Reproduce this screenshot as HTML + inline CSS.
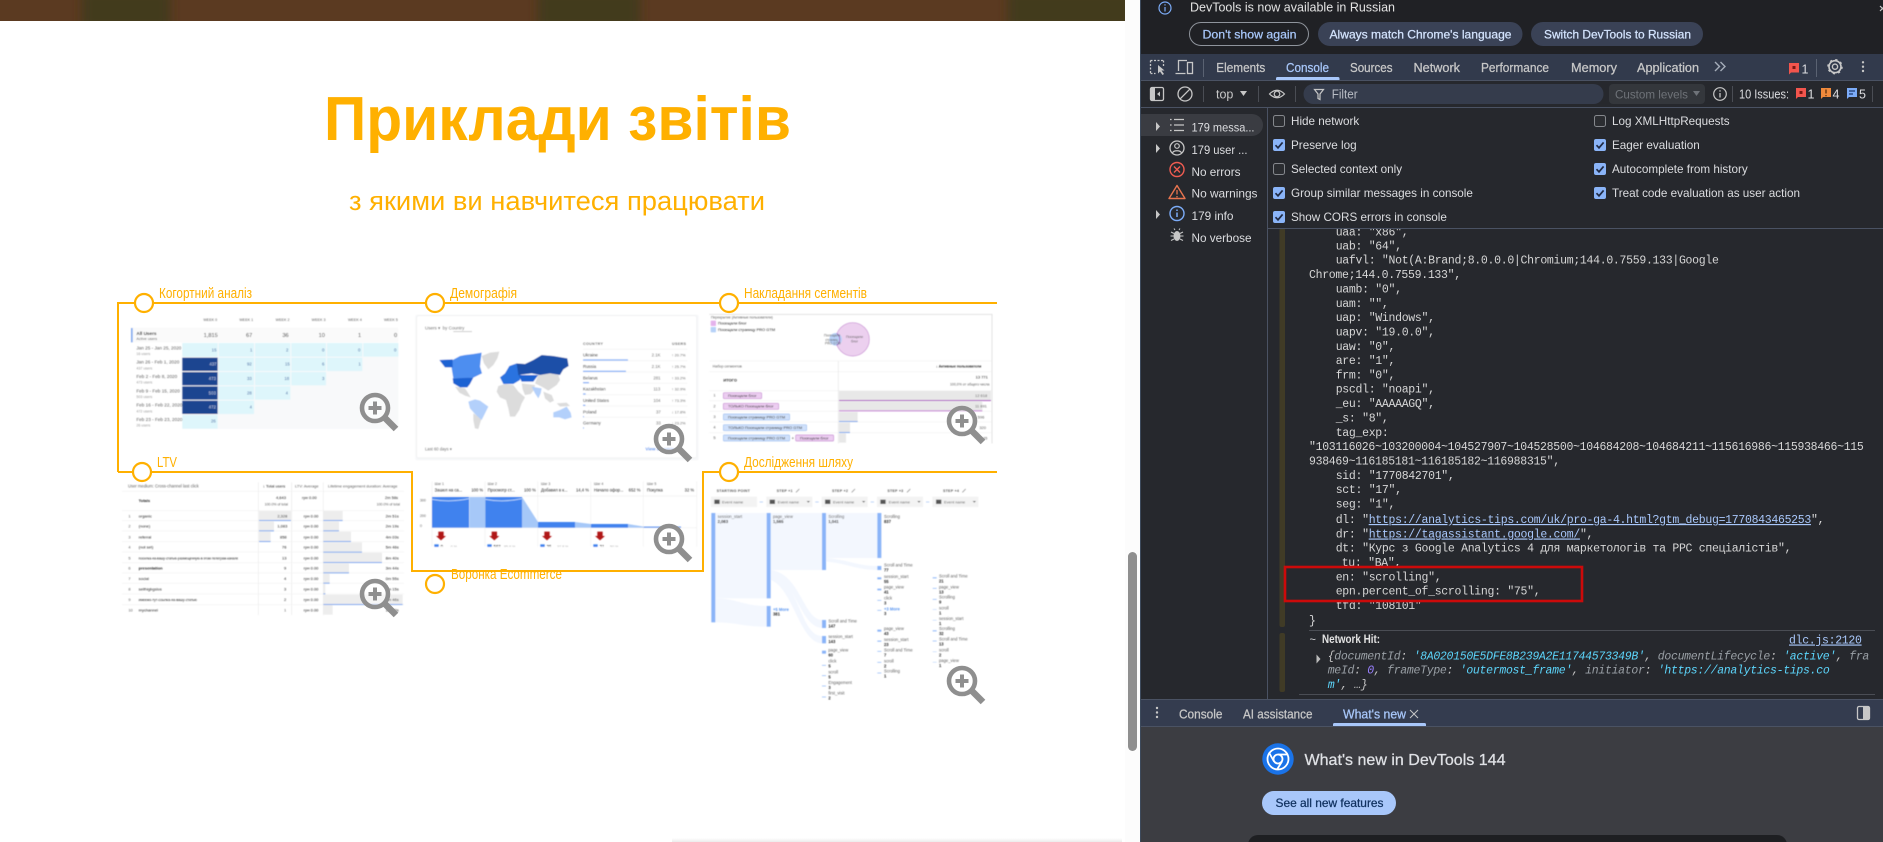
<!DOCTYPE html>
<html lang="uk">
<head>
<meta charset="utf-8">
<title>Приклади звітів</title>
<style>
html,body{margin:0;padding:0;width:1883px;height:842px;overflow:hidden;background:#fff}
svg{display:block;position:absolute;left:0;top:0}
text{font-family:"Liberation Sans","DejaVu Sans",sans-serif;white-space:pre}
.m text,text.m{font-family:"Liberation Mono","DejaVu Sans Mono",monospace;font-size:11.5px;letter-spacing:-.3px;fill:#d6d6d6}
.s text{font-size:11.7px;fill:#dcdde0}
.t{font-size:15px;fill:#5f5f5f}
.d{font-size:15px;fill:#262626}
.l{font-size:15px;fill:#ffb000}
.md{stroke-width:.25px}
</style>
</head>
<body>
<svg width="1883" height="842" viewBox="0 0 1883 842" xmlns="http://www.w3.org/2000/svg">
<defs>
<filter id="b" x="-5%" y="-5%" width="110%" height="110%"><feGaussianBlur stdDeviation="1.5"/></filter>
<filter id="b2" x="-5%" y="-20%" width="110%" height="140%"><feGaussianBlur stdDeviation="5"/></filter>
<filter id="bm" x="-10%" y="-10%" width="120%" height="120%"><feGaussianBlur stdDeviation=".35"/></filter>
<linearGradient id="sh" x1="0" y1="0" x2="0" y2="1"><stop offset="0" stop-color="#fff"/><stop offset="1" stop-color="#ececec"/></linearGradient>
<clipPath id="top"><rect width="1125" height="21"/></clipPath>
<g id="mag" filter="url(#bm)">
<line x1="10" y1="10" x2="21" y2="21" stroke="#8f8f8f" stroke-width="6.5"/>
<circle r="13" fill="#fff" fill-opacity=".45" stroke="#8f8f8f" stroke-width="4.6"/>
<path d="M-6.500 0H6.500M0-6.500V6.500" stroke="#8f8f8f" stroke-width="4"/>
</g>
<g id="cb"><rect width="12" height="12" rx="2" fill="#8ab4f8"/><path d="M2.500 6.200 5 8.800 9.600 3.400" fill="none" stroke="#1f2a44" stroke-width="1.700"/></g>
<g id="cu"><rect x=".5" y=".5" width="11" height="11" rx="2" fill="#2b2d31" stroke="#85888d"/></g>
</defs>

<!-- PAGE -->
<rect width="1140" height="842" fill="#fff"/>
<g clip-path="url(#top)">
<rect x="-5" y="-5" width="1140" height="30" fill="#5b3a21"/>
<g filter="url(#b2)">
<rect x="82" y="-10" width="88" height="40" fill="#433a1d"/>
<rect x="538" y="-10" width="102" height="40" fill="#433a1d"/>
<rect x="1008" y="-10" width="125" height="40" fill="#433a1d"/>
</g>
</g>
<rect x="1125" width="15" height="842" fill="#fcfcfc"/>
<rect x="1128" y="552" width="9" height="199" rx="4.500" fill="#8f8f8f"/>
<rect x="672" y="838" width="450" height="4" fill="url(#sh)"/>

<text x="324" y="140" font-size="62" font-weight="700" fill="#ffb000" textLength="467" lengthAdjust="spacingAndGlyphs">Приклади звітів</text>
<text x="349" y="210" font-size="26.500" fill="#ffb000" textLength="416" lengthAdjust="spacingAndGlyphs">з якими ви навчитеся працювати</text>

<!-- Cohort panel -->
<g transform="translate(100 280) scale(.33333)">
<g filter="url(#b)">
<text class="t" x="310" y="123" style="font-size:11px">WEEK 0</text><text class="t" x="418" y="123" style="font-size:11px">WEEK 1</text><text class="t" x="527" y="123" style="font-size:11px">WEEK 2</text><text class="t" x="635" y="123" style="font-size:11px">WEEK 3</text><text class="t" x="744" y="123" style="font-size:11px">WEEK 4</text><text class="t" x="852" y="123" style="font-size:11px">WEEK 5</text>
<rect x="92" y="143" width="803" height="44" fill="#fafafa"/>
<rect x="93" y="144" width="5" height="43" fill="#7ba7ee"/>
<text class="d" x="109" y="165" style="font-weight:700;font-size:14px">All Users</text><text class="t" x="109" y="180" style="font-size:11.500px">Active users</text>
<text class="d" x="311" y="171" style="font-size:17px">1,815</text><text class="d" x="438" y="171" style="font-size:17px">67</text><text class="d" x="547" y="171" style="font-size:17px">36</text><text class="d" x="656" y="171" style="font-size:17px">10</text><text class="d" x="774" y="171" style="font-size:17px">1</text><text class="d" x="882" y="171" style="font-size:17px">0</text>
<!-- cell grid -->
<rect x="247" y="189" width="648" height="258" fill="#f8f9fa"/>
<g fill="#def6fb"><rect x="247" y="189" width="106" height="41"/><rect x="356" y="189" width="106" height="41"/><rect x="465" y="189" width="106" height="41"/><rect x="574" y="189" width="104" height="41"/><rect x="681" y="189" width="106" height="41"/><rect x="790" y="189" width="105" height="41"/>
<rect x="356" y="233" width="106" height="40"/><rect x="465" y="233" width="106" height="40"/><rect x="574" y="233" width="104" height="40"/><rect x="681" y="233" width="106" height="40"/>
<rect x="356" y="276" width="106" height="40"/><rect x="465" y="276" width="106" height="40"/><rect x="574" y="276" width="104" height="40"/>
<rect x="356" y="319" width="106" height="40"/><rect x="465" y="319" width="106" height="40"/>
<rect x="356" y="362" width="106" height="40"/>
<rect x="247" y="405" width="106" height="41"/></g>
<g fill="#1f4590"><rect x="247" y="233" width="106" height="40"/><rect x="247" y="276" width="106" height="40"/><rect x="247" y="319" width="106" height="40"/><rect x="247" y="362" width="106" height="40"/></g>
<g font-size="13" fill="#3f66a3">
<text x="335" y="215">15</text><text x="450" y="215">1</text><text x="558" y="215">2</text><text x="666" y="215">0</text><text x="774" y="215">0</text><text x="882" y="215">0</text>
<text x="328" y="257" fill="#c8d4ea">437</text><text x="441" y="257">92</text><text x="555" y="257">15</text><text x="666" y="257">6</text><text x="775" y="257">1</text>
<text x="326" y="300" fill="#c8d4ea">473</text><text x="441" y="300">33</text><text x="553" y="300">18</text><text x="666" y="300">3</text>
<text x="326" y="343" fill="#c8d4ea">503</text><text x="441" y="343">28</text><text x="557" y="343">4</text>
<text x="326" y="386" fill="#c8d4ea">472</text><text x="449" y="386">4</text>
<text x="333" y="428">26</text>
</g>
<g>
<text class="t" x="109" y="209" style="font-size:14px">Jan 25 - Jan 25, 2020</text><text class="t" x="109" y="225" style="font-size:11px;fill:#999">16 users</text>
<text class="t" x="109" y="251" style="font-size:14px">Jan 26 - Feb 1, 2020</text><text class="t" x="109" y="268" style="font-size:11px;fill:#999">437 users</text>
<text class="t" x="109" y="294" style="font-size:14px">Feb 2 - Feb 8, 2020</text><text class="t" x="109" y="311" style="font-size:11px;fill:#999">473 users</text>
<text class="t" x="109" y="337" style="font-size:14px">Feb 9 - Feb 15, 2020</text><text class="t" x="109" y="354" style="font-size:11px;fill:#999">503 users</text>
<text class="t" x="109" y="380" style="font-size:14px">Feb 16 - Feb 22, 2020</text><text class="t" x="109" y="397" style="font-size:11px;fill:#999">472 users</text>
<text class="t" x="109" y="423" style="font-size:14px">Feb 23 - Feb 23, 2020</text><text class="t" x="109" y="440" style="font-size:11px;fill:#999">26 users</text>
</g>
</g>
</g>

<!-- LTV panel -->
<g transform="translate(100 280) scale(.33333)">
<g filter="url(#b)">
<text class="t" x="84" y="623" style="font-size:12.500px">User medium: Cross-channel last click</text>
<text class="d" x="489" y="623" style="font-size:12px">↓ Total users</text>
<text class="t" x="585" y="623" style="font-size:12px">LTV: Average</text>
<text class="t" x="684" y="623" style="font-size:12px">Lifetime engagement duration: Average</text>
<path d="M475 607V1005M575 607V1005M670 607V1005" stroke="#eaeaea" stroke-width="2"/>
<path d="M66 634H912M66 692H912M66 722H912M66 753H912M66 785H912M66 816H912M66 848H912M66 879H912M66 910H912M66 942H912M66 974H912" stroke="#efefef" stroke-width="1.500"/>
<text class="d" x="116" y="666" style="font-size:12px;font-weight:700">Totals</text>
<text class="d" x="528" y="657" style="font-size:12px">4,643</text><text class="t" x="494" y="677" style="font-size:10.500px">100.0% of total</text>
<text class="d" x="606" y="657" style="font-size:12px">грн 0.00</text>
<text class="d" x="855" y="657" style="font-size:12px">2m 58s</text><text class="t" x="830" y="677" style="font-size:10.500px">100.0% of total</text>
<!-- bars -->
<g fill="#ededed"><rect x="477" y="693" width="96" height="28"/><rect x="477" y="724" width="45" height="28"/><rect x="477" y="755" width="35" height="29"/>
<rect x="670" y="693" width="58" height="28"/><rect x="670" y="724" width="47" height="28"/><rect x="670" y="755" width="83" height="29"/><rect x="670" y="787" width="116" height="28"/><rect x="670" y="818" width="176" height="29"/><rect x="670" y="850" width="77" height="28"/><rect x="670" y="881" width="19" height="28"/><rect x="670" y="912" width="6" height="29"/><rect x="670" y="944" width="238" height="29"/><rect x="670" y="975" width="28" height="29"/></g>
<g fill="#7ba7ee"><rect x="477" y="720" width="96" height="3"/><rect x="477" y="751" width="45" height="3"/><rect x="477" y="783" width="35" height="3"/>
<rect x="670" y="720" width="58" height="3"/><rect x="670" y="751" width="47" height="3"/><rect x="670" y="783" width="83" height="3"/><rect x="670" y="815" width="116" height="3"/><rect x="670" y="846" width="176" height="3"/><rect x="670" y="877" width="77" height="3"/><rect x="670" y="908" width="19" height="3"/><rect x="670" y="940" width="6" height="3"/><rect x="670" y="972" width="238" height="3"/></g>
<g>
<text class="t" x="85" y="712" style="font-size:12px">1</text><text class="d" x="116" y="712" style="font-size:12px">organic</text><text class="d" x="532" y="712" style="font-size:12px">2,328</text><text class="d" x="611" y="712" style="font-size:12px">грн 0.00</text><text class="d" x="857" y="712" style="font-size:12px">2m 51s</text>
<text class="t" x="85" y="743" style="font-size:12px">2</text><text class="d" x="116" y="743" style="font-size:12px">(none)</text><text class="d" x="532" y="743" style="font-size:12px">1,083</text><text class="d" x="611" y="743" style="font-size:12px">грн 0.00</text><text class="d" x="857" y="743" style="font-size:12px">2m 19s</text>
<text class="t" x="85" y="775" style="font-size:12px">3</text><text class="d" x="116" y="775" style="font-size:12px">referral</text><text class="d" x="540" y="775" style="font-size:12px">858</text><text class="d" x="611" y="775" style="font-size:12px">грн 0.00</text><text class="d" x="857" y="775" style="font-size:12px">4m 03s</text>
<text class="t" x="85" y="806" style="font-size:12px">4</text><text class="d" x="116" y="806" style="font-size:12px">(not set)</text><text class="d" x="546" y="806" style="font-size:12px">76</text><text class="d" x="611" y="806" style="font-size:12px">грн 0.00</text><text class="d" x="857" y="806" style="font-size:12px">5m 46s</text>
<text class="t" x="85" y="838" style="font-size:12px">5</text><text class="d" x="116" y="838" style="font-size:10px">посилка-на-вашу-статью-размещенную-в-этом-телеграм-канале</text><text class="d" x="546" y="838" style="font-size:12px">13</text><text class="d" x="611" y="838" style="font-size:12px">грн 0.00</text><text class="d" x="857" y="838" style="font-size:12px">8m 40s</text>
<text class="t" x="85" y="868" style="font-size:12px">6</text><text class="d" x="116" y="868" style="font-size:12px;font-weight:700">presentation</text><text class="d" x="552" y="868" style="font-size:12px">9</text><text class="d" x="611" y="868" style="font-size:12px">грн 0.00</text><text class="d" x="857" y="868" style="font-size:12px">3m 44s</text>
<text class="t" x="85" y="900" style="font-size:12px">7</text><text class="d" x="116" y="900" style="font-size:12px">social</text><text class="d" x="552" y="900" style="font-size:12px">4</text><text class="d" x="611" y="900" style="font-size:12px">грн 0.00</text><text class="d" x="857" y="900" style="font-size:12px">0m 55s</text>
<text class="t" x="85" y="931" style="font-size:12px">8</text><text class="d" x="116" y="931" style="font-size:12px">selfhigbgslos</text><text class="d" x="552" y="931" style="font-size:12px">3</text><text class="d" x="611" y="931" style="font-size:12px">грн 0.00</text><text class="d" x="857" y="931" style="font-size:12px">0m 15s</text>
<text class="t" x="85" y="963" style="font-size:12px">9</text><text class="d" x="116" y="963" style="font-size:10.500px">имеемо-тут-ссылка-на-вашу-статью</text><text class="d" x="552" y="963" style="font-size:12px">2</text><text class="d" x="611" y="963" style="font-size:12px">грн 0.00</text><text class="d" x="857" y="963" style="font-size:12px">4m 46s</text>
<text class="t" x="85" y="994" style="font-size:12px">10</text><text class="d" x="116" y="994" style="font-size:12px">mychannel</text><text class="t" x="552" y="994" style="font-size:12px">1</text><text class="d" x="611" y="994" style="font-size:12px">грн 0.00</text><text class="d" x="857" y="994" style="font-size:12px">1m 20s</text>
</g>
</g>
</g>

<!-- Demographics and funnel -->
<g transform="translate(410 280) scale(.33333)">
<g filter="url(#b)">
<rect x="16" y="104" width="850" height="437" rx="6" fill="#f7f8f9"/>
<rect x="20" y="107" width="840" height="427" rx="6" fill="#fff" stroke="#eceef0" stroke-width="2"/>
<text class="t" x="45" y="149" style="font-size:13.500px">Users ▾  by Country</text>
<rect x="130" y="154" width="56" height="1.500" fill="#999"/>
<!-- map -->
<g fill="#dcdcdc">
<polygon points="215,228 240,218 268,215 262,235 250,255 235,268 222,250"/>
<polygon points="135,320 165,325 175,340 182,352 165,347 148,338"/>
<polygon points="190,400 215,415 210,430 205,447 195,445 190,420"/>
<polygon points="265,318 285,312 310,315 325,335 345,352 335,370 328,390 315,410 300,410 295,385 288,360 270,352 260,335"/>
<polygon points="335,310 375,315 372,330 362,342 345,345 338,328"/>
<polygon points="385,285 420,280 445,285 450,300 440,315 415,332 395,320 375,310"/>
<polygon points="400,335 425,345 432,362 420,368 405,355"/>
<polygon points="440,370 470,368 480,378 450,380"/>
</g>
<g fill="#b3d0fb"><polygon points="175,365 195,358 210,362 235,380 225,400 215,420 195,402 180,385"/><polygon points="365,320 395,325 392,340 385,355 375,340"/><polygon points="430,397 450,390 470,380 482,398 485,412 465,418 448,412 430,412"/></g>
<polygon points="128,240 150,228 165,225 190,222 215,218 212,240 210,260 216,280 190,293 160,295 130,295 125,265" fill="#4d8ef0"/>
<polygon points="88,240 128,238 128,262 105,262" fill="#1a62d2"/>
<polygon points="128,295 190,293 180,312 172,322 150,322 130,310" fill="#1a62d2"/>
<polygon points="270,292 285,280 298,258 320,250 332,262 330,300 310,312 280,312" fill="#2a73e0"/>
<polygon points="320,250 345,252 370,240 395,225 430,228 472,235 476,258 460,268 450,285 420,280 390,285 365,280 325,285" fill="#1a4fa8"/>
<polygon points="325,285 385,285 370,305 335,305" fill="#1a62d2"/>
<!-- list -->
<text class="t" x="519" y="195" style="font-size:11px;letter-spacing:1px;font-weight:700">COUNTRY</text><text class="t" x="786" y="195" style="font-size:11px;letter-spacing:1px;font-weight:700">USERS</text>
<path d="M519 208H832M519 242H832M519 276H832M519 310H832M519 344H832M519 378H832M519 412H832" stroke="#ececec" stroke-width="1.500"/>
<g>
<text class="d" x="519" y="230" style="font-size:13px">Ukraine</text><text class="t" x="725" y="230" style="font-size:13px">2.1K</text><text class="t" x="785" y="230" style="font-size:11.500px">↑ 20.7%</text>
<text class="d" x="519" y="264" style="font-size:13px">Russia</text><text class="t" x="725" y="264" style="font-size:13px">2.1K</text><text class="t" x="785" y="264" style="font-size:11.500px">↑ 25.7%</text>
<text class="d" x="519" y="298" style="font-size:13px">Belarus</text><text class="t" x="730" y="298" style="font-size:13px">281</text><text class="t" x="785" y="298" style="font-size:11.500px">↑ 33.2%</text>
<text class="d" x="519" y="332" style="font-size:13px">Kazakhstan</text><text class="t" x="730" y="332" style="font-size:13px">113</text><text class="t" x="785" y="332" style="font-size:11.500px">↑ 32.9%</text>
<text class="d" x="519" y="366" style="font-size:13px">United States</text><text class="t" x="730" y="366" style="font-size:13px">104</text><text class="t" x="785" y="366" style="font-size:11.500px">↑ 73.3%</text>
<text class="d" x="519" y="400" style="font-size:13px">Poland</text><text class="t" x="738" y="400" style="font-size:13px">37</text><text class="t" x="785" y="400" style="font-size:11.500px">↓ 17.8%</text>
<text class="d" x="519" y="434" style="font-size:13px">Germany</text><text class="t" x="738" y="434" style="font-size:13px">33</text><text class="t" x="785" y="434" style="font-size:11.500px">↓ 23.2%</text>
</g>
<g fill="#8ab4f8"><rect x="519" y="238" width="135" height="4"/><rect x="519" y="272" width="129" height="4"/><rect x="519" y="306" width="18" height="4"/><rect x="519" y="340" width="8" height="4"/><rect x="519" y="374" width="7" height="4"/><rect x="519" y="408" width="3" height="4"/><rect x="519" y="442" width="3" height="4"/></g>
<text class="t" x="45" y="512" style="font-size:12.500px">Last 60 days ▾</text>
<text x="706" y="512" font-size="13.500" font-weight="700" fill="#5a95f0">View countries</text>
<!-- funnel -->
<path d="M66 604V800M225 604V800M383 604V800M542 604V800M700 604V800M860 604V800" stroke="#ececec" stroke-width="1.500"/>
<path d="M66 648H860M66 743H860" stroke="#ececec" stroke-width="1.500"/>
<g>
<text class="t" x="74" y="615" style="font-size:10.500px">Шаг 1</text><text class="d" x="74" y="634" style="font-size:12.500px">Зашел на са...</text><text class="d" x="184" y="634" style="font-size:12.500px">100 %</text>
<text class="t" x="233" y="615" style="font-size:10.500px">Шаг 2</text><text class="d" x="233" y="634" style="font-size:12.500px">Просмотр ст...</text><text class="d" x="342" y="634" style="font-size:12.500px">100 %</text>
<text class="t" x="393" y="615" style="font-size:10.500px">Шаг 3</text><text class="d" x="393" y="634" style="font-size:12.500px">Добавил в к...</text><text class="d" x="498" y="634" style="font-size:12.500px">14,4 %</text>
<text class="t" x="552" y="615" style="font-size:10.500px">Шаг 4</text><text class="d" x="552" y="634" style="font-size:12.500px">Начало офор...</text><text class="d" x="656" y="634" style="font-size:12.500px">652 %</text>
<text class="t" x="711" y="615" style="font-size:10.500px">Шаг 5</text><text class="d" x="711" y="634" style="font-size:12.500px">Покупка</text><text class="d" x="824" y="634" style="font-size:12.500px">32 %</text>
</g>
<text class="t" x="30" y="665" style="font-size:10.500px">300</text><text class="t" x="30" y="711" style="font-size:10.500px">200</text><text class="t" x="30" y="741" style="font-size:10.500px">0</text>
<rect x="178" y="651" width="48" height="92" fill="#a6c8f8"/>
<polygon points="336,651 384,726 384,743 336,743" fill="#a6c8f8"/>
<polygon points="495,726 543,732 543,743 495,743" fill="#a6c8f8"/>
<polygon points="654,732 701,740 701,743 654,743" fill="#a6c8f8"/>
<g fill="#3f82ee"><rect x="66" y="651" width="111" height="92"/><rect x="226" y="651" width="110" height="92"/><rect x="384" y="726" width="111" height="17"/><rect x="543" y="732" width="111" height="11"/><rect x="701" y="740" width="112" height="3"/></g>
<path d="M66 658Q120 668 177 656M226 658Q280 668 336 656" stroke="#b5d1fa" stroke-width="3" fill="none"/>
<g fill="#b01818"><polygon points="85,755 101,755 101,768 108,768 93,781 78,768 85,768"/><polygon points="245,755 261,755 261,768 268,768 253,781 238,768 245,768"/><polygon points="403,755 419,755 419,768 426,768 411,781 396,768 403,768"/><polygon points="562,755 578,755 578,768 585,768 570,781 555,768 562,768"/></g>
<g fill="#3f82ee"><rect x="73" y="793" width="13" height="11"/><rect x="232" y="793" width="13" height="11"/><rect x="391" y="793" width="13" height="11"/><rect x="550" y="793" width="13" height="11"/></g>
<g>
<text class="d" x="92" y="804" style="font-size:12.500px">0</text><text class="t" x="122" y="804" style="font-size:11px;fill:#aaa">0 %</text>
<text class="d" x="251" y="804" style="font-size:12.500px">562</text><text class="t" x="282" y="804" style="font-size:11px;fill:#aaa">85,6 %</text>
<text class="d" x="410" y="804" style="font-size:12.500px">35</text><text class="t" x="441" y="804" style="font-size:11px;fill:#aaa">37,8 %</text>
<text class="d" x="569" y="804" style="font-size:12.500px">31</text><text class="t" x="600" y="804" style="font-size:11px;fill:#aaa">50 %</text>
</g>
<rect x="55" y="801" width="815" height="30" fill="#fff"/>
</g>
</g>

<!-- Overlap + path exploration -->
<g transform="translate(700 280) scale(.33333)">
<g filter="url(#b)">
<path d="M28 103H876V490" fill="none" stroke="#e2e2e2" stroke-width="3"/>
<text class="t" x="33" y="116" style="font-size:10.500px">Перекрытие (Активные пользователи)</text>
<rect x="32" y="122" width="16" height="16" rx="2" fill="#e4b2ec"/><text class="d" x="54" y="134" style="font-size:12px">Посещали блог</text>
<rect x="32" y="141" width="16" height="16" rx="2" fill="#b6d1f8"/><text class="d" x="54" y="153" style="font-size:12px">Посещали страницу PRO GTM</text>
<circle cx="458" cy="178" r="50" fill="#ecd0ef" stroke="#c993d4" stroke-width="2"/>
<circle cx="407" cy="178" r="19" fill="#b9d1f7"/>
<path d="M410 160a22 22 0 0 1 0 36" stroke="#a356b8" stroke-width="2.500" fill="none"/>
<text class="t" x="372" y="170" style="font-size:10px">Посещали</text><text class="t" x="376" y="183" style="font-size:10px">страниц</text><text class="t" x="375" y="194" style="font-size:10px">PRO GTM</text>
<text class="t" x="438" y="174" style="font-size:10.500px">Посещали</text><text class="t" x="453" y="188" style="font-size:10.500px">блог</text>
<path d="M28 243H876M28 275H876M28 332H876M28 362H876M28 394H876M28 426H876M28 458H876" stroke="#eeeeee" stroke-width="1.500"/>
<path d="M415 243V490" stroke="#e6e6e6" stroke-width="2"/>
<text class="t" x="38" y="262" style="font-size:11px">Набор сегментов</text>
<text class="d" x="708" y="262" style="font-size:10.500px;font-weight:700">↓ Активные пользователи</text>
<text class="d" x="70" y="305" style="font-size:12px;font-weight:700">ИТОГО</text>
<text class="d" x="827" y="296" style="font-size:12px">13 771</text><text class="t" x="750" y="317" style="font-size:10.500px">100,0% от общего числа</text>
<text class="t" x="40" y="350" style="font-size:12px">1</text><text class="t" x="40" y="383" style="font-size:12px">2</text><text class="t" x="40" y="414" style="font-size:12px">3</text><text class="t" x="40" y="445" style="font-size:12px">4</text><text class="t" x="40" y="477" style="font-size:12px">5</text>
<rect x="70" y="338" width="115" height="18" rx="3" fill="#eccdf1" stroke="#c993d4" stroke-width="2"/><text class="d" x="84" y="351" style="font-size:12px">Посещали блог</text>
<rect x="70" y="370" width="166" height="18" rx="3" fill="#eccdf1" stroke="#c993d4" stroke-width="2"/><text class="d" x="84" y="383" style="font-size:12px">ТОЛЬКО Посещали блог</text>
<rect x="70" y="402" width="199" height="18" rx="3" fill="#cfe0fa" stroke="#a3c2f2" stroke-width="2"/><text class="d" x="84" y="415" style="font-size:12px">Посещали страницу PRO GTM</text>
<rect x="70" y="434" width="250" height="18" rx="3" fill="#cfe0fa" stroke="#a3c2f2" stroke-width="2"/><text class="d" x="84" y="447" style="font-size:12px">ТОЛЬКО Посещали страницу PRO GTM</text>
<rect x="70" y="465" width="199" height="18" rx="3" fill="#cfe0fa" stroke="#a3c2f2" stroke-width="2"/><text class="d" x="84" y="478" style="font-size:12px">Посещали страницу PRO GTM</text>
<text class="d" x="275" y="479" style="font-size:12px">+</text>
<rect x="287" y="465" width="114" height="18" rx="3" fill="#eccdf1" stroke="#c993d4" stroke-width="2"/><text class="d" x="300" y="478" style="font-size:12px">Посещали блог</text>
<g fill="#e8e8e8"><rect x="417" y="333" width="456" height="28"/><rect x="417" y="364" width="430" height="28"/><rect x="417" y="396" width="56" height="28"/><rect x="417" y="428" width="33" height="28"/><rect x="417" y="460" width="21" height="28"/></g>
<rect x="417" y="360" width="456" height="3" fill="#a93fc0"/><rect x="417" y="391" width="430" height="3" fill="#c77ed6"/><rect x="417" y="423" width="56" height="3" fill="#7ba7ee"/><rect x="417" y="456" width="33" height="3" fill="#7ba7ee"/>
<text class="t" x="825" y="351" style="font-size:12px">12 618</text><text class="t" x="825" y="383" style="font-size:12px">11 891</text><text class="t" x="833" y="415" style="font-size:12px">596</text><text class="t" x="838" y="447" style="font-size:12px">320</text><text class="t" x="842" y="479" style="font-size:12px">145</text>

<!-- path exploration -->
<text class="t" x="50" y="636" style="font-size:11px;font-weight:700;letter-spacing:.6px">STARTING POINT</text>
<text class="t" x="230" y="636" style="font-size:11px;font-weight:700;letter-spacing:.6px">STEP +1</text>
<text class="t" x="396" y="636" style="font-size:11px;font-weight:700;letter-spacing:.6px">STEP +2</text>
<text class="t" x="562" y="636" style="font-size:11px;font-weight:700;letter-spacing:.6px">STEP +3</text>
<text class="t" x="729" y="636" style="font-size:11px;font-weight:700;letter-spacing:.6px">STEP +4</text>
<path d="M288 637 298 627M455 637 465 627M621 637 631 627M787 637 797 627" stroke="#888" stroke-width="2"/>
<g fill="#f3f3f3"><rect x="33" y="650" width="138" height="31"/><rect x="199" y="650" width="138" height="31"/><rect x="365" y="650" width="138" height="31"/><rect x="531" y="650" width="138" height="31"/><rect x="697" y="650" width="138" height="31"/></g>
<g fill="#555"><rect x="43" y="659" width="16" height="13"/><rect x="209" y="659" width="16" height="13"/><rect x="375" y="659" width="16" height="13"/><rect x="541" y="659" width="16" height="13"/><rect x="708" y="659" width="16" height="13"/></g>
<g><text class="t" x="66" y="670" style="font-size:12px">Event name</text><text class="t" x="233" y="670" style="font-size:12px">Event name</text><text class="t" x="399" y="670" style="font-size:12px">Event name</text><text class="t" x="566" y="670" style="font-size:12px">Event name</text><text class="t" x="732" y="670" style="font-size:12px">Event name</text></g>
<path d="M320 663h10l-5 5zM486 663h10l-5 5zM652 663h10l-5 5zM818 663h10l-5 5z" fill="#555"/>
<path d="M179 666h10M346 666h10M512 666h10M678 666h10" stroke="#a9c6f6" stroke-width="2"/>
<g fill="#f3f7fe">
<rect x="46" y="699" width="154" height="256"/>
<path d="M46 955C110 955 130 978 200 978V1040C130 1040 110 1027 46 1027Z"/>
<rect x="212" y="699" width="154" height="171"/>
<rect x="378" y="699" width="154" height="135"/>
<path d="M378 834C450 840 470 858 532 858V870C470 870 440 850 378 845Z"/>
<path d="M212 870C300 880 310 1018 366 1020V1044C300 1040 290 900 212 885Z"/>
<path d="M212 885C300 900 300 1068 366 1068V1090C300 1090 280 925 212 900Z"/>
</g>
<g fill="#8ab4f8">
<rect x="34" y="699" width="12" height="328"/>
<rect x="200" y="699" width="12" height="256"/><rect x="200" y="978" width="12" height="62"/>
<rect x="366" y="699" width="12" height="171"/><rect x="366" y="1020" width="12" height="24"/><rect x="366" y="1068" width="12" height="22"/><rect x="366" y="1112" width="12" height="9"/><rect x="366" y="1155" width="12" height="2"/><rect x="366" y="1186" width="12" height="2"/><rect x="366" y="1217" width="12" height="2"/><rect x="366" y="1250" width="12" height="2"/>
<rect x="532" y="699" width="12" height="135"/><rect x="532" y="858" width="12" height="12"/><rect x="532" y="892" width="12" height="6"/><rect x="532" y="926" width="12" height="5"/><rect x="532" y="960" width="12" height="2"/><rect x="532" y="990" width="12" height="2"/><rect x="532" y="1049" width="12" height="6"/><rect x="532" y="1082" width="12" height="3"/><rect x="532" y="1113" width="12" height="2"/><rect x="532" y="1146" width="12" height="2"/><rect x="532" y="1178" width="12" height="2"/>
<rect x="698" y="892" width="12" height="3"/><rect x="698" y="924" width="12" height="2"/><rect x="698" y="957" width="12" height="2"/><rect x="698" y="988" width="12" height="1"/><rect x="698" y="1020" width="12" height="1"/><rect x="698" y="1051" width="12" height="3"/><rect x="698" y="1082" width="12" height="2"/><rect x="698" y="1115" width="12" height="1"/><rect x="698" y="1146" width="12" height="1"/>
</g>
<g>
<text class="t" x="53" y="714" style="font-size:12.500px">session_start</text><text class="d" x="53" y="729" style="font-size:12.500px;font-weight:700">2,083</text>
<text class="t" x="219" y="714" style="font-size:12.500px">page_view</text><text class="d" x="219" y="729" style="font-size:12.500px;font-weight:700">1,565</text>
<text x="219" y="993" font-size="12.500" font-weight="700" fill="#5a95f0">+5 More</text><text class="d" x="219" y="1007" style="font-size:12.500px;font-weight:700">381</text>
<text class="t" x="385" y="714" style="font-size:12.500px">Scrolling</text><text class="d" x="385" y="729" style="font-size:12.500px;font-weight:700">1,041</text>
<text class="t" x="552" y="714" style="font-size:12.500px">Scrolling</text><text class="d" x="552" y="729" style="font-size:12.500px;font-weight:700">837</text>
<text class="t" x="552" y="860" style="font-size:12.500px">Scroll and Time</text><text class="d" x="552" y="875" style="font-size:12.500px;font-weight:700">77</text>
<text class="t" x="552" y="894" style="font-size:12.500px">session_start</text><text class="d" x="552" y="909" style="font-size:12.500px;font-weight:700">55</text>
<text class="t" x="552" y="926" style="font-size:12.500px">page_view</text><text class="d" x="552" y="941" style="font-size:12.500px;font-weight:700">41</text>
<text class="t" x="552" y="959" style="font-size:12.500px">click</text><text class="d" x="552" y="974" style="font-size:12.500px;font-weight:700">3</text>
<text x="552" y="991" font-size="12.500" font-weight="700" fill="#5a95f0">+3 More</text><text class="d" x="552" y="1005" style="font-size:12.500px;font-weight:700">3</text>
<text class="t" x="385" y="1028" style="font-size:12.500px">Scroll and Time</text><text class="d" x="385" y="1043" style="font-size:12.500px;font-weight:700">147</text>
<text class="t" x="385" y="1074" style="font-size:12.500px">session_start</text><text class="d" x="385" y="1089" style="font-size:12.500px;font-weight:700">143</text>
<text class="t" x="385" y="1115" style="font-size:12.500px">page_view</text><text class="d" x="385" y="1130" style="font-size:12.500px;font-weight:700">60</text>
<text class="t" x="385" y="1148" style="font-size:12.500px">click</text><text class="d" x="385" y="1163" style="font-size:12.500px;font-weight:700">5</text>
<text class="t" x="385" y="1180" style="font-size:12.500px">scroll</text><text class="d" x="385" y="1195" style="font-size:12.500px;font-weight:700">5</text>
<text class="t" x="385" y="1212" style="font-size:12.500px">Engagement</text><text class="d" x="385" y="1227" style="font-size:12.500px;font-weight:700">3</text>
<text class="t" x="385" y="1243" style="font-size:12.500px">first_visit</text><text class="d" x="385" y="1258" style="font-size:12.500px;font-weight:700">2</text>
<text class="t" x="552" y="1050" style="font-size:12.500px">page_view</text><text class="d" x="552" y="1065" style="font-size:12.500px;font-weight:700">43</text>
<text class="t" x="552" y="1083" style="font-size:12.500px">session_start</text><text class="d" x="552" y="1098" style="font-size:12.500px;font-weight:700">23</text>
<text class="t" x="552" y="1115" style="font-size:12.500px">Scroll and Time</text><text class="d" x="552" y="1130" style="font-size:12.500px;font-weight:700">7</text>
<text class="t" x="552" y="1147" style="font-size:12.500px">scroll</text><text class="d" x="552" y="1162" style="font-size:12.500px;font-weight:700">2</text>
<text class="t" x="552" y="1178" style="font-size:12.500px">Scrolling</text><text class="d" x="552" y="1193" style="font-size:12.500px;font-weight:700">1</text>
<text class="t" x="717" y="893" style="font-size:12.500px">Scroll and Time</text><text class="d" x="717" y="908" style="font-size:12.500px;font-weight:700">21</text>
<text class="t" x="717" y="925" style="font-size:12.500px">page_view</text><text class="d" x="717" y="940" style="font-size:12.500px;font-weight:700">13</text>
<text class="t" x="717" y="956" style="font-size:12.500px">Scrolling</text><text class="d" x="717" y="971" style="font-size:12.500px;font-weight:700">9</text>
<text class="t" x="717" y="988" style="font-size:12.500px">scroll</text><text class="d" x="717" y="1003" style="font-size:12.500px;font-weight:700">1</text>
<text class="t" x="717" y="1020" style="font-size:12.500px">session_start</text><text class="d" x="717" y="1035" style="font-size:12.500px;font-weight:700">1</text>
<text class="t" x="717" y="1050" style="font-size:12.500px">Scrolling</text><text class="d" x="717" y="1065" style="font-size:12.500px;font-weight:700">32</text>
<text class="t" x="717" y="1082" style="font-size:12.500px">Scroll and Time</text><text class="d" x="717" y="1097" style="font-size:12.500px;font-weight:700">13</text>
<text class="t" x="717" y="1114" style="font-size:12.500px">scroll</text><text class="d" x="717" y="1129" style="font-size:12.500px;font-weight:700">2</text>
<text class="t" x="717" y="1146" style="font-size:12.500px">page_view</text><text class="d" x="717" y="1161" style="font-size:12.500px;font-weight:700">1</text>
</g>
</g>
</g>

<!-- orange frame -->
<path d="M118 472V303H997M118 472H412V571H703V472H997" fill="none" stroke="#ffb000" stroke-width="2"/>
<g fill="#fff" stroke="#ffb000" stroke-width="2.200">
<circle cx="144" cy="303" r="9"/><circle cx="142" cy="472" r="9"/><circle cx="435" cy="303" r="9"/><circle cx="435" cy="584" r="9"/><circle cx="729" cy="303" r="9"/><circle cx="729" cy="472" r="9"/>
</g>
<text class="l" x="159" y="298" textLength="93" lengthAdjust="spacingAndGlyphs">Когортний аналіз</text>
<text class="l" x="450" y="298" textLength="67" lengthAdjust="spacingAndGlyphs">Демографія</text>
<text class="l" x="744" y="298" textLength="123" lengthAdjust="spacingAndGlyphs">Накладання сегментів</text>
<text class="l" x="157" y="467" textLength="20" lengthAdjust="spacingAndGlyphs">LTV</text>
<text class="l" x="451" y="579" textLength="111" lengthAdjust="spacingAndGlyphs">Воронка Ecommerce</text>
<text class="l" x="744" y="467" textLength="109" lengthAdjust="spacingAndGlyphs">Дослідження шляху</text>

<use href="#mag" x="375" y="408"/><use href="#mag" x="375" y="594"/><use href="#mag" x="669" y="439"/><use href="#mag" x="669" y="539"/><use href="#mag" x="962" y="421"/><use href="#mag" x="962" y="681"/>

<!-- DEVTOOLS -->
<rect x="1140" width="743" height="842" fill="#26282d"/>
<rect x="1140" width="743" height="54" fill="#202125"/>
<rect x="1140" y="54" width="743" height="26" fill="#323a4c"/>
<rect x="1140" y="80" width="743" height="1" fill="#4a5263"/>
<rect x="1140" y="81" width="743" height="26" fill="#26282d"/>
<rect x="1140" y="107" width="743" height="1" fill="#4a5263"/>

<!-- console lines -->
<rect x="1279.500" y="228" width="5.500" height="399" rx="2" fill="#403b26"/>
<rect x="1279.500" y="633" width="5.500" height="59" rx="2" fill="#403b26"/>
<g class="m">
<text x="1335.700" y="235.500">uaa: "x86",</text>
<text x="1335.700" y="249.500">uab: "64",</text>
<text x="1335.700" y="263.500">uafvl: "Not(A:Brand;8.0.0.0|Chromium;144.0.7559.133|Google</text>
<text x="1309" y="278">Chrome;144.0.7559.133",</text>
<text x="1335.700" y="292.500">uamb: "0",</text>
<text x="1335.700" y="307">uam: "",</text>
<text x="1335.700" y="321">uap: "Windows",</text>
<text x="1335.700" y="335.500">uapv: "19.0.0",</text>
<text x="1335.700" y="350">uaw: "0",</text>
<text x="1335.700" y="364">are: "1",</text>
<text x="1335.700" y="378.500">frm: "0",</text>
<text x="1335.700" y="392.500">pscdl: "noapi",</text>
<text x="1335.700" y="407">_eu: "AAAAAGQ",</text>
<text x="1335.700" y="421.500">_s: "8",</text>
<text x="1335.700" y="436">tag_exp:</text>
<text x="1309" y="450">"103116026~103200004~104527907~104528500~104684208~104684211~115616986~115938466~115</text>
<text x="1309" y="464.500">938469~116185181~116185182~116988315",</text>
<text x="1335.700" y="479">sid: "1770842701",</text>
<text x="1335.700" y="493">sct: "17",</text>
<text x="1335.700" y="507.500">seg: "1",</text>
<text x="1335.700" y="523">dl: "<tspan fill="#a8c7fa" text-decoration="underline">https://analytics-tips.com/uk/pro-ga-4.html?gtm_debug=1770843465253</tspan>",</text>
<text x="1335.700" y="537.500">dr: "<tspan fill="#a8c7fa" text-decoration="underline">https://tagassistant.google.com/</tspan>",</text>
<text x="1335.700" y="551.500">dt: "Курс з Google Analytics 4 для маркетологів та PPC спеціалістів",</text>
<text x="1341.700" y="566">tu: "BA",</text>
<text x="1335.700" y="580.500">en: "scrolling",</text>
<text x="1335.700" y="594.500">epn.percent_of_scrolling: "75",</text>
<text x="1335.700" y="609">tfd: "108101"</text>
<text x="1309" y="624">}</text>
</g>
<rect x="1285" y="567" width="297" height="34" fill="none" stroke="#cc0a0a" stroke-width="2.600"/>
<rect x="1309" y="630" width="566" height="1" fill="#4a4d54"/>
<text x="1309.500" y="643" font-size="11" fill="#dcdde0">~</text>
<text x="1322" y="643" font-size="12" font-weight="700" fill="#e3e3e3" textLength="58" lengthAdjust="spacingAndGlyphs">Network Hit:</text>
<text x="1789" y="643.500" class="m" text-decoration="underline" style="fill:#a8c7fa">dlc.js:2120</text>
<path d="M1316.500 654.500l4 4.500-4 4.500z" fill="#bbb"/>
<g class="m" font-style="italic">
<text x="1327.700" y="659.500"><tspan fill="#c6c6c6">{</tspan><tspan fill="#9aa0a6">documentId</tspan><tspan fill="#c6c6c6">: </tspan><tspan fill="#5cd5fb">'8A020150E5DFE8B239A2E11744573349B'</tspan><tspan fill="#c6c6c6">, </tspan><tspan fill="#9aa0a6">documentLifecycle</tspan><tspan fill="#c6c6c6">: </tspan><tspan fill="#5cd5fb">'active'</tspan><tspan fill="#c6c6c6">, </tspan><tspan fill="#9aa0a6">fra</tspan></text>
<text x="1327.700" y="673.500"><tspan fill="#9aa0a6">meId</tspan><tspan fill="#c6c6c6">: </tspan><tspan fill="#9980ff">0</tspan><tspan fill="#c6c6c6">, </tspan><tspan fill="#9aa0a6">frameType</tspan><tspan fill="#c6c6c6">: </tspan><tspan fill="#5cd5fb">'outermost_frame'</tspan><tspan fill="#c6c6c6">, </tspan><tspan fill="#9aa0a6">initiator</tspan><tspan fill="#c6c6c6">: </tspan><tspan fill="#5cd5fb">'https://analytics-tips.co</tspan></text>
<text x="1327.700" y="688"><tspan fill="#5cd5fb">m'</tspan><tspan fill="#c6c6c6">, …}</tspan></text>
</g>
<rect x="1299" y="694" width="576" height="1" fill="#4a4d54"/>

<!-- checkboxes panel -->
<rect x="1268" y="108" width="615" height="120" fill="#26282d"/>
<rect x="1268" y="228" width="615" height="1" fill="#4a5263"/>
<use href="#cu" x="1273" y="115"/><use href="#cb" x="1273" y="139"/><use href="#cu" x="1273" y="163"/><use href="#cb" x="1273" y="187"/><use href="#cb" x="1273" y="211"/>
<use href="#cu" x="1594" y="115"/><use href="#cb" x="1594" y="139"/><use href="#cb" x="1594" y="163"/><use href="#cb" x="1594" y="187"/>
<g class="s">
<text x="1291" y="125">Hide network</text>
<text x="1291" y="149">Preserve log</text>
<text x="1291" y="173">Selected context only</text>
<text x="1291" y="197">Group similar messages in console</text>
<text x="1291" y="221">Show CORS errors in console</text>
<text x="1612" y="125">Log XMLHttpRequests</text>
<text x="1612" y="149">Eager evaluation</text>
<text x="1612" y="173">Autocomplete from history</text>
<text x="1612" y="197">Treat code evaluation as user action</text>
</g>

<!-- sidebar -->
<rect x="1140" y="108" width="127" height="592" fill="#26282d"/>
<rect x="1267" y="108" width="1" height="592" fill="#4a5263"/>
<path d="M1141 114h111a11 11 0 0 1 0 22h-111z" fill="#3a3c42"/>
<path d="M1156 122l4 4.500-4 4.500zM1156 144l4 4.500-4 4.500zM1156 210l4 4.500-4 4.500z" fill="#c7c7c7"/>
<path d="M1170 119.500h1.600M1170 125h1.600M1170 130.500h1.600M1174 119.500h10M1174 125h10M1174 130.500h10" stroke="#c7c7c7" stroke-width="1.300"/>
<circle cx="1177" cy="148" r="7" fill="none" stroke="#c7c7c7" stroke-width="1.300"/><circle cx="1177" cy="146" r="2.300" fill="none" stroke="#c7c7c7" stroke-width="1.200"/><path d="M1172.500 153c1-3 8-3 9 0" fill="none" stroke="#c7c7c7" stroke-width="1.200"/>
<circle cx="1177" cy="169.500" r="7" fill="none" stroke="#ef5c51" stroke-width="1.400"/><path d="M1174 166.500l6 6M1180 166.500l-6 6" stroke="#ef5c51" stroke-width="1.400"/>
<path d="M1177 185.500l8 13h-16z" fill="none" stroke="#e8744f" stroke-width="1.400" stroke-linejoin="round"/><path d="M1177 190v4.500M1177 196v1.400" stroke="#e8744f" stroke-width="1.300"/>
<circle cx="1177" cy="213.500" r="7" fill="none" stroke="#7cacf8" stroke-width="1.400"/><path d="M1177 212.500v4.500M1177 209.500v1.500" stroke="#7cacf8" stroke-width="1.500"/>
<ellipse cx="1177" cy="236" rx="3.500" ry="5" fill="#c7c7c7"/><path d="M1171 232l3 1.500M1183 232l-3 1.500M1170.500 236h3M1183.500 236h-3M1171 240.500l3-1.500M1183 240.500l-3-1.500M1175 230l-1-1.500M1179 230l1-1.500" stroke="#c7c7c7" stroke-width="1"/>
<g class="s">
<text x="1191.500" y="131.500" textLength="63" lengthAdjust="spacingAndGlyphs">179 messa...</text>
<text x="1191.500" y="154" textLength="56" lengthAdjust="spacingAndGlyphs">179 user ...</text>
<text x="1191.500" y="176" textLength="49" lengthAdjust="spacingAndGlyphs">No errors</text>
<text x="1191.500" y="197.500" textLength="66" lengthAdjust="spacingAndGlyphs">No warnings</text>
<text x="1191.500" y="220" textLength="42" lengthAdjust="spacingAndGlyphs">179 info</text>
<text x="1191.500" y="242" textLength="60" lengthAdjust="spacingAndGlyphs">No verbose</text>
</g>

<!-- infobar -->
<circle cx="1165" cy="8" r="6" fill="none" stroke="#7cacf8" stroke-width="1.200"/><path d="M1165 7v4.500M1165 4.200v1.300" stroke="#7cacf8" stroke-width="1.200"/>
<text x="1190" y="11.500" font-size="13" fill="#e3e3e3" textLength="205" lengthAdjust="spacingAndGlyphs">DevTools is now available in Russian</text>
<rect x="1189.500" y="22.500" width="119" height="23" rx="11.500" fill="none" stroke="#8f949c"/>
<text class="md" x="1202.500" y="38.500" font-size="12" fill="#a8c7fa" stroke="#a8c7fa" textLength="94" lengthAdjust="spacingAndGlyphs">Don't show again</text>
<rect x="1318" y="22" width="204.500" height="24" rx="12" fill="#3a4256"/>
<text class="md" x="1329.500" y="38.500" font-size="12" fill="#d3e3fd" stroke="#d3e3fd" textLength="182" lengthAdjust="spacingAndGlyphs">Always match Chrome's language</text>
<rect x="1531" y="22" width="172" height="24" rx="12" fill="#3a4256"/>
<text class="md" x="1544" y="38.500" font-size="12" fill="#d3e3fd" stroke="#d3e3fd" textLength="147" lengthAdjust="spacingAndGlyphs">Switch DevTools to Russian</text>
<path d="M1880 6l5 5M1885 6l-5 5" stroke="#c7c7c7" stroke-width="1.200"/>

<!-- tab bar -->
<path d="M1150.500 60.500h13M1150.500 60.500v13M1163.500 60.500v6M1150.500 73.500h5" stroke="#c7c7c7" stroke-width="1.300" stroke-dasharray="2 1.500" fill="none"/>
<path d="M1158 65v8.500l2-2 2.500 3.500 1.500-1-2.500-3.500h3z" fill="#c7c7c7"/>
<path d="M1178.500 71V60.500h8.500M1175.500 73.500h10" stroke="#c7c7c7" stroke-width="1.300" fill="none"/><rect x="1187.500" y="62.500" width="5" height="11" fill="none" stroke="#c7c7c7" stroke-width="1.300"/>
<rect x="1203" y="59" width="1" height="18" fill="#5a6272"/>
<g font-size="12.500" fill="#c7c7c7" stroke="#c7c7c7" class="md">
<text x="1216.300" y="72" textLength="49" lengthAdjust="spacingAndGlyphs">Elements</text>
<text x="1286" y="72" textLength="43" lengthAdjust="spacingAndGlyphs" fill="#a8c7fa" stroke="#a8c7fa">Console</text>
<text x="1350" y="72" textLength="42.500" lengthAdjust="spacingAndGlyphs">Sources</text>
<text x="1413.500" y="72" textLength="46.500" lengthAdjust="spacingAndGlyphs">Network</text>
<text x="1481" y="72" textLength="68" lengthAdjust="spacingAndGlyphs">Performance</text>
<text x="1571" y="72" textLength="46" lengthAdjust="spacingAndGlyphs">Memory</text>
<text x="1637" y="72" textLength="62" lengthAdjust="spacingAndGlyphs">Application</text>
</g>
<path d="M1276 80v-1.500a1.500 1.500 0 0 1 1.500-1.500h60.500a1.500 1.500 0 0 1 1.500 1.500v1.500z" fill="#a8c7fa"/>
<path d="M1715 62l4.500 4.500-4.500 4.500M1720.500 62l4.500 4.500-4.500 4.500" fill="none" stroke="#a5adba" stroke-width="1.400"/>
<path d="M1789 63h10v9.500h-8l-2 2z" fill="#f2554d"/><rect x="1792.500" y="66" width="3" height="3" fill="#7a1712"/>
<text x="1801.500" y="73.500" font-size="12.500" fill="#dcdde0">1</text>
<rect x="1816" y="59" width="1" height="18" fill="#5a6272"/>
<circle cx="1835" cy="66.700" r="2.600" fill="none" stroke="#c7c7c7" stroke-width="1.400"/>
<circle cx="1835" cy="66.700" r="6" fill="none" stroke="#c7c7c7" stroke-width="1.600"/>
<circle cx="1835" cy="66.700" r="7" fill="none" stroke="#c7c7c7" stroke-width="1.500" stroke-dasharray="2.200 3.300"/>
<path d="M1863 62.300h.01M1863 66.700h.01M1863 71h.01" stroke="#c7c7c7" stroke-width="2.400" stroke-linecap="round"/>

<!-- toolbar -->
<rect x="1150.500" y="87.500" width="13" height="13" rx="1.500" fill="none" stroke="#c7c7c7" stroke-width="1.300"/><rect x="1151" y="88" width="4" height="12" fill="#c7c7c7"/><path d="M1160 91.500l-3 2.500 3 2.500z" fill="#c7c7c7"/>
<circle cx="1185" cy="94" r="7" fill="none" stroke="#c7c7c7" stroke-width="1.300"/><path d="M1180.200 98.800l9.600-9.600" stroke="#c7c7c7" stroke-width="1.300"/>
<rect x="1203" y="86" width="1" height="16" fill="#4a4d54"/>
<text x="1216" y="98.500" font-size="12.500" fill="#c7c7c7">top</text>
<path d="M1240 91h7l-3.500 5z" fill="#c7c7c7"/>
<rect x="1258" y="86" width="1" height="16" fill="#4a4d54"/>
<path d="M1269.500 94q7.500-7.500 15 0q-7.500 7.500-15 0z" fill="none" stroke="#c7c7c7" stroke-width="1.200"/><circle cx="1277" cy="94" r="2.800" fill="none" stroke="#c7c7c7" stroke-width="1.200"/>
<rect x="1295" y="86" width="1" height="16" fill="#4a4d54"/>
<rect x="1303.500" y="84" width="300" height="20" rx="10" fill="#353c4c"/>
<path d="M1314.500 89.500h9l-3.500 4.500v5.500l-2-1v-4.500z" fill="none" stroke="#c7c7c7" stroke-width="1.200"/>
<text x="1331.700" y="98.500" font-size="12.500" fill="#b8bcc4" textLength="26" lengthAdjust="spacingAndGlyphs">Filter</text>
<path d="M1609 88a4 4 0 0 1 4-4h88a4 4 0 0 1 4 4v12a4 4 0 0 1-4 4h-88a4 4 0 0 1-4-4z" fill="#34373c"/>
<text x="1615" y="98.500" font-size="12" fill="#6f7379" textLength="73" lengthAdjust="spacingAndGlyphs">Custom levels</text>
<path d="M1693 91h7l-3.500 5z" fill="#6f7379"/>
<circle cx="1720" cy="94" r="6.300" fill="none" stroke="#c7c7c7" stroke-width="1.200"/><path d="M1720 93v4.500M1720 90.200v1.400" stroke="#c7c7c7" stroke-width="1.300"/>
<rect x="1732" y="86" width="1" height="16" fill="#4a4d54"/>
<text x="1739" y="98.500" font-size="12.500" fill="#dcdde0" textLength="50" lengthAdjust="spacingAndGlyphs">10 Issues:</text>
<path d="M1796 88h10v9h-8l-2 2z" fill="#f2554d"/><rect x="1799.500" y="91" width="3" height="3" fill="#7a1712"/>
<text x="1807.500" y="98.500" font-size="12.500" fill="#dcdde0">1</text>
<path d="M1821 88h10v9h-8l-2 2z" fill="#f08a3c"/><path d="M1826 89.500v4M1826 95v1.300" stroke="#5a2e0c" stroke-width="1.300"/>
<text x="1832.500" y="98.500" font-size="12.500" fill="#dcdde0">4</text>
<path d="M1847 88h10v9h-8l-2 2z" fill="#7cacf8"/><path d="M1849 91h6M1849 94h4" stroke="#1c3a6e" stroke-width="1.200"/>
<text x="1859" y="98.500" font-size="12.500" fill="#dcdde0">5</text>
<rect x="1872" y="86" width="1" height="16" fill="#4a4d54"/>

<!-- drawer -->
<rect x="1140" y="699" width="743" height="27" fill="#343c4f"/>
<rect x="1140" y="699" width="743" height="1" fill="#4a5263"/>
<rect x="1140" y="726" width="743" height="116" fill="#3c3d42"/>
<rect x="1140" y="726" width="743" height="1" fill="#4a5263"/>
<path d="M1157 708h.01M1157 712.500h.01M1157 717h.01" stroke="#c7c7c7" stroke-width="2.400" stroke-linecap="round"/>
<g font-size="12.500" fill="#c7c7c7" stroke="#c7c7c7" class="md">
<text x="1179" y="718.500" textLength="43.500" lengthAdjust="spacingAndGlyphs">Console</text>
<text x="1243" y="718.500" textLength="69.500" lengthAdjust="spacingAndGlyphs">AI assistance</text>
<text x="1343" y="718.500" textLength="63" lengthAdjust="spacingAndGlyphs" fill="#a8c7fa" stroke="#a8c7fa">What's new</text>
</g>
<path d="M1410 710l8 8M1418 710l-8 8" stroke="#c7c7c7" stroke-width="1"/>
<path d="M1333 726v-1.500a1.500 1.500 0 0 1 1.500-1.500h90a1.500 1.500 0 0 1 1.500 1.500v1.500z" fill="#a8c7fa"/>
<rect x="1857.500" y="706.500" width="12" height="13" rx="1.500" fill="none" stroke="#c7c7c7" stroke-width="1.300"/><rect x="1863" y="707" width="6" height="12" fill="#c7c7c7"/>
<circle cx="1278" cy="759" r="15.700" fill="#1a73e8"/>
<circle cx="1278" cy="759" r="10.500" fill="none" stroke="#fff" stroke-width="1.800"/>
<circle cx="1278" cy="759" r="4.500" fill="none" stroke="#fff" stroke-width="1.800"/>
<path d="M1278 754.500H1288M1274 761.500 1269 752.500M1282 761.500 1277 769.500" stroke="#fff" stroke-width="1.800"/>
<text class="md" x="1304.500" y="765" font-size="16" fill="#dfe1e5" stroke="#dfe1e5" textLength="201" lengthAdjust="spacingAndGlyphs">What's new in DevTools 144</text>
<rect x="1262" y="791" width="134" height="24" rx="12" fill="#a8c7fa"/>
<text class="md" x="1275.500" y="807" font-size="12" fill="#10315f" stroke="#10315f" textLength="108" lengthAdjust="spacingAndGlyphs">See all new features</text>
<path d="M1248 850v-5a10 10 0 0 1 10-10h519a10 10 0 0 1 10 10v5z" fill="#1e1f22"/>
<rect x="1140" width="1" height="842" fill="#3d4a5c"/>
</svg>
</body>
</html>
